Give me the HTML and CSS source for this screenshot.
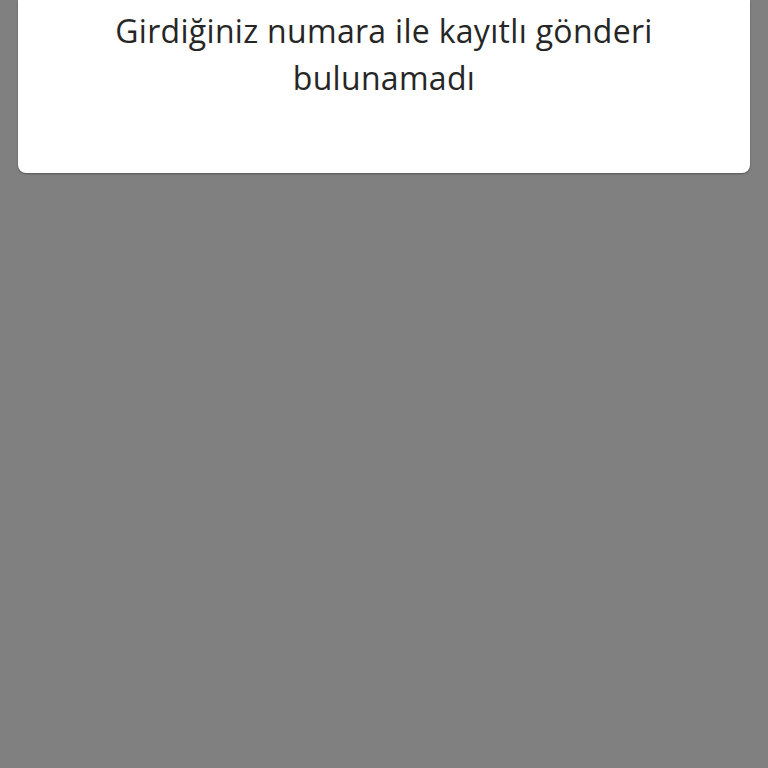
FILE: index.html
```html
<!DOCTYPE html>
<html lang="tr">
<head>
<meta charset="utf-8">
<link rel="stylesheet" href="styles.css">
</head>
<body>
<div class="card">
  <p class="message">Girdiğiniz numara ile kayıtlı gönderi<br>bulunamadı</p>
</div>
</body>
</html>
```
FILE: styles.css
```css
html, body {
  margin: 0;
  padding: 0;
  background: #808080;
  height: 100%;
}
.card {
  margin: 0 18px;
  background: #ffffff;
  border-radius: 0 0 8px 8px;
  box-shadow: 0 1px 2px rgba(0,0,0,0.35);
  height: 173px;
  box-sizing: border-box;
  padding-top: 7px;
}
.message {
  margin: 0;
  text-align: center;
  font-family: "Open Sans", "DejaVu Sans", sans-serif;
  font-weight: 400;
  font-size: 32px;
  line-height: 47px;
  letter-spacing: 0.3px;
  color: #262626;
}
```
